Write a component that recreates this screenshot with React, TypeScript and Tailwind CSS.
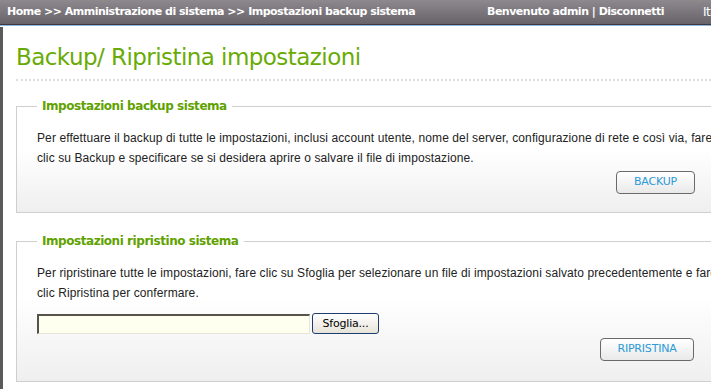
export default function App() {
  return (
    <div className="w-[711px] h-[389px] overflow-hidden bg-white flex flex-col">
      {/* top bar */}
      <div className="h-[25px] shrink-0 bg-gradient-to-b from-[#8e898d] to-[#68636a] border-b border-[#3f3a40] flex items-center text-white font-bold text-[11px] whitespace-nowrap font-['DejaVu_Sans',sans-serif] tracking-[-0.5px]">
        <span className="pl-[7px] w-[487px] shrink-0">Home &gt;&gt; Amministrazione di sistema &gt;&gt; Impostazioni backup sistema</span>
        <span className="w-[216px] shrink-0">Benvenuto admin | Disconnetti</span>
        <span className="font-normal text-[12px]">Italiano</span>
      </div>
      <div className="h-px shrink-0 bg-[#8fb8e0]" />

      <div className="flex flex-1 min-h-0">
        <div className="w-[3px] shrink-0 bg-[#5a5a5a] mt-px" />
        <div className="pl-[13px] pt-[14px] w-[760px] shrink-0">
          <h1 className="text-[#68ab06] text-[23px] leading-[34px] font-['DejaVu_Sans',sans-serif] tracking-[-0.55px] pb-[5px] border-b-2 border-dotted border-[#dedede]">
            Backup/ Ripristina impostazioni
          </h1>

          <fieldset className="mt-[18px] w-[740px] border border-[#cfcfcf] pl-[20px] pb-[18px] bg-gradient-to-b from-white from-40% to-[#efefef]">
            <legend className="px-[5px] text-[12px] font-bold text-[#5fa200] font-['DejaVu_Sans',sans-serif] tracking-[-0.45px] leading-[15px]">
              Impostazioni backup sistema
            </legend>
            <div className="w-[684px] mt-[14px]">
              <p className="text-[12px] leading-[20px] text-[#222] font-['Liberation_Sans',Arial,sans-serif] tracking-[0.1px]">
                Per effettuare il backup di tutte le impostazioni, inclusi account utente, nome del server, configurazione di rete e così via, fare clic su Backup e specificare se si desidera aprire o salvare il file di impostazione.
              </p>
              <div className="flex justify-end pr-[26px] mt-[3px]">
                <button className="w-[79px] h-[23px] rounded-[4px] border border-[#6a6a6a] bg-gradient-to-b from-white to-[#e9e9e9] text-[#2b9ad6] text-[11px] font-['DejaVu_Sans',sans-serif] tracking-[-0.2px]">
                  BACKUP
                </button>
              </div>
            </div>
          </fieldset>

          <fieldset className="mt-[21px] w-[740px] border border-[#cfcfcf] pl-[20px] pb-[20px] bg-gradient-to-b from-white from-40% to-[#efefef]">
            <legend className="px-[5px] text-[12px] font-bold text-[#5fa200] font-['DejaVu_Sans',sans-serif] tracking-[-0.45px] leading-[15px]">
              Impostazioni ripristino sistema
            </legend>
            <div className="w-[684px] mt-[14px]">
              <p className="text-[12px] leading-[20px] text-[#222] font-['Liberation_Sans',Arial,sans-serif] tracking-[0.1px]">
                Per ripristinare tutte le impostazioni, fare clic su Sfoglia per selezionare un file di impostazioni salvato precedentemente e fare clic Ripristina per confermare.
              </p>
              <div className="flex items-center gap-[2px] mt-[10px]">
                <div className="w-[273px] h-[20px] bg-[#fffff0] border-t-2 border-l-2 border-[#57534c] border-b border-r border-b-[#e8e6da] border-r-[#e8e6da]" />
                <button className="w-[67px] h-[21px] rounded-[3px] border border-[#1e3d6e] bg-gradient-to-b from-white to-[#e6e3d8] text-[11px] text-black font-['DejaVu_Sans',sans-serif] tracking-[-0.2px] leading-none">
                  Sfoglia...
                </button>
              </div>
              <div className="flex justify-end pr-[27px] mt-[4px]">
                <button className="w-[94px] h-[23px] rounded-[4px] border border-[#6a6a6a] bg-gradient-to-b from-white to-[#e9e9e9] text-[#2b9ad6] text-[11px] font-['DejaVu_Sans',sans-serif] tracking-[-0.2px]">
                  RIPRISTINA
                </button>
              </div>
            </div>
          </fieldset>
        </div>
      </div>
    </div>
  )
}
